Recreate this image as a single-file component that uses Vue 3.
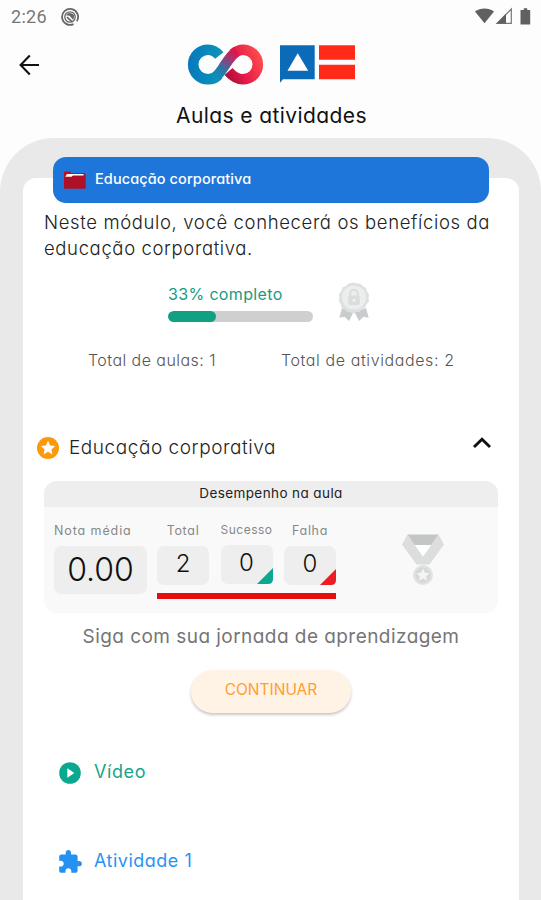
<script setup>
const stats = [
  { key: 'total', label: 'Total', value: 2, corner: '' },
  { key: 'success', label: 'Sucesso', value: 0, corner: '#0aa88f' },
  { key: 'fail', label: 'Falha', value: 0, corner: '#ee1c23' },
]
const progress = 33
</script>

<template>
  <div class="screen">
    <header class="status">
      <span class="time">2:26</span>
      <svg class="status-app" width="20" height="20" viewBox="0 0 20 20" fill="none" stroke="#666">
        <path d="M13.500 17.100A8 8 0 1 1 16.800 14.200" stroke-width="1.800" />
        <circle cx="10" cy="10" r="5.200" stroke-width="1.300" />
        <path d="M6 8.200C8 5 12 5.300 14.300 8.500L13.300 13 9.500 8.800Z" fill="#666" stroke="none" />
        <path d="M7 10.200 12 14.600" stroke-width="1.600" />
      </svg>
      <svg class="signals" width="58" height="20" viewBox="0 0 58 20">
        <path d="M0 4.600C5.500.3 13.500.3 19 4.600L9.500 16.200Z" fill="#606060" />
        <path d="M36.300 2V16.300H22Z" fill="none" stroke="#777" stroke-width="1.200" />
        <path d="M31 6.800V16.500H21.500Z" fill="#606060" />
        <path d="M48.800 1.200H52.200V3H55.200V17.500H45.500V3H48.800Z" fill="#606060" />
      </svg>
    </header>

    <div class="topbar">
      <svg class="back" width="22" height="22" viewBox="0 0 22 22" fill="none" stroke="#111" stroke-width="2.100">
        <path d="M20 11H2M10.800 1.500 1.600 11 10.800 20.500" />
      </svg>
      <svg class="logo" width="170" height="44" viewBox="0 0 170 44">
        <defs>
          <linearGradient id="blueLoop" gradientUnits="userSpaceOnUse" x1="1" y1="0" x2="42" y2="0">
            <stop offset="0" stop-color="#0878bd" />
            <stop offset="1" stop-color="#0b9bb8" />
          </linearGradient>
          <linearGradient id="redLoop" gradientUnits="userSpaceOnUse" x1="38" y1="34" x2="76" y2="16">
            <stop offset="0" stop-color="#a50d36" />
            <stop offset=".4" stop-color="#e31848" />
            <stop offset="1" stop-color="#ff4d4d" />
          </linearGradient>
          <linearGradient id="bridge" gradientUnits="userSpaceOnUse" x1="28" y1="34" x2="47" y2="9">
            <stop offset="0" stop-color="#0a90ba" />
            <stop offset=".35" stop-color="#2c75a8" />
            <stop offset=".6" stop-color="#7d4a84" />
            <stop offset="1" stop-color="#dc174d" />
          </linearGradient>
        </defs>
        <g fill="none" stroke-width="10.600">
          <path d="M46 10.900C49 8.200 52 6.700 56 6.700A14.800 14.800 0 1 1 56 36.300C50 36.300 45.500 33 41.500 28.500" stroke="url(#redLoop)" />
          <path d="M32.300 12.500C29 8.500 25 6.700 21 6.700A14.800 14.800 0 1 0 21 36.300C25 36.300 28.500 35 31.500 31.800" stroke="url(#blueLoop)" />
          <path d="M30.200 19.500 40.300 7.500" stroke="#fdfdfd" stroke-width="2" />
          <path d="M27 35.200C31 32.500 33.500 29 37 23.500S44.500 11.500 50 8.200" stroke="url(#bridge)" />
        </g>
        <path d="M93 2.200H127.700V36.300H96L93 39.800Z" fill="#0c6bb8" />
        <path d="M110.700 10.200 121.200 27.800H100.500Z" fill="#fff" />
        <path d="M132 2.200H168V16.700H132ZM132 21.800H168V36.300H132Z" fill="#ff2a17" />
      </svg>
    </div>
    <h1 class="title"><span>Aulas e atividades</span></h1>

    <main class="shell">
      <div class="sheet">
        <section class="banner">
          <svg width="23" height="19" viewBox="0 0 23 19">
            <path d="M1 1.500Q1 .5 2 .5H7L8.500 2H21.500Q22.500 2 22.500 3V17.500H1Z" fill="#b21325" />
            <path d="M2.500 5.200 4 3H20.500V4.500H10L8.500 5.800H2.500Z" fill="#fff" />
            <path d="M1 6.600H8.500L10 5.300H22.500V17.500H1Z" fill="#ad1027" />
          </svg>
          <span>Educação corporativa</span>
        </section>

        <p class="intro">Neste módulo, você conhecerá os benefícios da<br>educação corporativa.</p>

        <section class="progress-row">
          <div class="progress">
            <div class="progress-label"><span>{{ progress }}% completo</span></div>
            <div class="track"><div class="fill" :style="{ width: progress + '%' }"></div></div>
          </div>
          <svg class="seal" width="32" height="42" viewBox="0 0 32 42">
            <path d="M4 26 1.300 35.800 6.500 34.800 11 39 15.500 30ZM28 26 30.700 35.800 25.500 34.800 21 39 16.500 30Z" fill="#c9cccc" />
            <path d="M16 .5 19 1.500 22.500 1.800 25 4.300 28 6 29 9.500 31 12.500 30.500 16 31 19.500 28.500 22.300 27 25.500 24 27 21.500 30 18 30 16 31.500 12.500 30.500 9 29.500 6.500 27 3.500 25.500 2.500 22 1 19 1.300 15.500 1 12 3.300 9 4.500 5.500 8 4 10.500 1.500Z" fill="#dee1e1" />
            <circle cx="16" cy="15.500" r="12" fill="#eceeee" />
            <path d="M12.200 14.500V11.500A3.800 3.800 0 0 1 19.800 11.500V14.500" fill="none" stroke="#dadddd" stroke-width="2" />
            <rect x="10.300" y="13.500" width="11.400" height="9.500" rx="1.500" fill="#dadddd" />
            <circle cx="16" cy="18.200" r="1.500" fill="#f1f2f2" />
          </svg>
        </section>

        <section class="totals">
          <span class="t1">Total de aulas: 1</span>
          <span class="t2">Total de atividades: 2</span>
        </section>

        <section class="lesson">
          <svg width="24" height="24" viewBox="0 0 24 24">
            <circle cx="12" cy="12" r="11" fill="#fb990b" />
            <path d="M12 4.700 14.100 9.400 19.200 9.900 15.400 13.400 16.500 18.400 12 15.800 7.500 18.400 8.600 13.400 4.800 9.900 9.900 9.400Z" fill="#fff" />
          </svg>
          <span>Educação corporativa</span>
          <svg class="chevron" width="20" height="14" viewBox="0 0 20 14" fill="none" stroke="#111" stroke-width="2.900">
            <path d="M2 11 10 3.200 18 11" />
          </svg>
        </section>

        <section class="card">
          <div class="card-head"><span>Desempenho na aula</span></div>
          <div class="card-body">
            <div class="average">
              <div class="label"><span>Nota média</span></div>
              <div class="score"><span>0.00</span></div>
            </div>
            <div class="stats">
              <div class="stat-row">
                <div v-for="s in stats" :key="s.key" class="stat" :class="s.key">
                  <div class="label"><span>{{ s.label }}</span></div>
                  <div class="box">
                    <span>{{ s.value }}</span>
                    <svg v-if="s.corner" class="corner" width="16" height="16" viewBox="0 0 16 16">
                      <path d="M16 0V11Q16 16 11 16H0Z" :fill="s.corner" />
                    </svg>
                  </div>
                </div>
              </div>
              <div class="redline"></div>
            </div>
            <svg class="medal" width="42" height="52" viewBox="0 0 42 52">
              <path d="M5.500 .5H36.500L30 11H12Z" fill="#c4c6c6" />
              <path d="M5.500 .5 0 10.500 14.500 30.500H27.500L42 10.500 36.500 .5 21 22.500Z" fill="#dcdede" />
              <path d="M13 11H29L21 22.500Z" fill="#fff" />
              <circle cx="21" cy="41" r="10" fill="#e0e2e2" />
              <circle cx="21" cy="41" r="7.600" fill="#d6d8d8" />
              <path d="M21 34.500 23 38.700 27.500 39.200 24.200 42.200 25 46.700 21 44.500 17 46.700 17.800 42.200 14.500 39.200 19 38.700Z" fill="#f3f4f4" />
            </svg>
          </div>
        </section>

        <p class="follow"><span>Siga com sua jornada de aprendizagem</span></p>
        <button class="continue"><span>CONTINUAR</span></button>

        <div class="item video">
          <svg width="24" height="24" viewBox="0 0 24 24">
            <circle cx="12" cy="12" r="10.800" fill="#0ba890" />
            <path d="M9.300 7.300 16.300 12 9.300 16.700Z" fill="#fff" />
          </svg>
          <span>Vídeo</span>
        </div>
        <div class="item activity">
          <svg width="26" height="26" viewBox="0 0 24 24">
            <path fill="#2491f3" d="M20.500 11H19V7c0-1.100-.9-2-2-2h-4V3.500C13 2.120 11.880 1 10.500 1S8 2.120 8 3.500V5H4c-1.100 0-1.990.9-1.990 2v3.800H3.500c1.490 0 2.700 1.210 2.700 2.700s-1.210 2.700-2.700 2.700H2V20c0 1.100.9 2 2 2h3.800v-1.500c0-1.490 1.210-2.700 2.700-2.700 1.490 0 2.700 1.210 2.700 2.700V22H17c1.100 0 2-.9 2-2v-4h1.500c1.380 0 2.500-1.120 2.500-2.500S21.880 11 20.500 11z" />
          </svg>
          <span>Atividade 1</span>
        </div>
      </div>
    </main>
  </div>
</template>

<style>
body { margin: 0; background: #fdfdfd; }
</style>

<style scoped>
* { box-sizing: border-box; }
.screen {
  width: 541px;
  height: 900px;
  overflow: hidden;
  background: #fdfdfd;
  font-family: Inter, "Open Sans", sans-serif;
  font-feature-settings: "cv11";
  display: flex;
  flex-direction: column;
  white-space: nowrap;
}
svg { display: block; flex: none; }
.status { height: 34px; display: flex; align-items: center; padding: 0 8px 0 11px; flex: none; }
.time { font: 400 18px/20px Roboto, sans-serif; color: #777; letter-spacing: .3px; }
.status-app { margin-left: 13px; }
.signals { margin-left: auto; }
.topbar { height: 62px; display: flex; align-items: center; flex: none; padding-left: 19px; }
.back { margin-right: 146px; }
.title { margin: 0; height: 42px; line-height: 39px; text-align: center; font-size: 21px; font-weight: 400; color: #111; flex: none; padding-left: 2px; }
.title span { letter-spacing: .4px; }
.shell { background: #e9e9e9; height: 762px; border-radius: 54px 54px 0 0; padding: 40px 22px 0 23px; flex: none; }
.sheet { background: #fff; height: 722px; border-radius: 13px 13px 0 0; padding: 0 21px; display: flex; flex-direction: column; }
.banner {
  flex: none;
  margin: -21px 9px 0;
  height: 46px;
  border-radius: 13px;
  background: #1e76da;
  display: flex;
  align-items: center;
  padding: 0 10px;
  gap: 9px;
  color: #fff;
  font-size: 14.500px;
  font-weight: 500;
}
.banner span { padding-bottom: 4px; letter-spacing: .1px; }
.intro { margin: 6px 0 0; font-size: 18.500px; font-weight: 300; line-height: 26px; color: #222; letter-spacing: .63px; }
.progress-row { display: flex; margin-top: 21px; padding-left: 124px; height: 42px; }
.progress { width: 145px; margin-right: 25px; }
.progress-label { height: 29px; line-height: 25px; font-size: 16px; color: #159c80; }
.progress-label span { letter-spacing: .35px; }
.track { height: 11px; border-radius: 6px; background: #cecfcf; overflow: hidden; }
.fill { height: 100%; border-radius: 6px; background: #12a083; }
.totals { display: flex; margin-top: 24px; padding-left: 44px; height: 24px; line-height: 24px; font-size: 16px; font-weight: 300; color: #555; }
.t1 { width: 193px; letter-spacing: .45px; }
.t2 { letter-spacing: .6px; }
.lesson { display: flex; align-items: center; height: 32px; margin: 60px 0 0 -8px; font-size: 19px; font-weight: 300; color: #222; gap: 9px; }
.lesson span { letter-spacing: .55px; padding-bottom: 2px; }
.chevron { margin-left: auto; margin-right: 6px; margin-bottom: 10px; }
.card { flex: none; margin-top: 17px; width: 454px; height: 132px; border-radius: 13px; background: #f9f9f9; overflow: hidden; }
.card-head { height: 26px; line-height: 24px; background: #eee; text-align: center; font-size: 13.500px; color: #222; }
.card-head span { letter-spacing: .4px; }
.card-body { display: flex; padding: 13px 11px 0 10px; }
.label { height: 20px; line-height: 21px; font-size: 12.500px; color: #888; text-align: center; }
.label span { letter-spacing: .7px; }
.average { width: 93px; margin-right: 10px; }
.average .label { text-align: left; margin-bottom: 6px; }
.average .label span { letter-spacing: .9px; }
.score { height: 48px; border-radius: 7px; background: #eee; line-height: 48px; font-size: 32px; font-weight: 300; text-align: center; color: #111; }
.stats { width: 179px; }
.stat-row { display: flex; justify-content: space-between; height: 67px; }
.stat { width: 52px; }
.stat .box { position: relative; height: 39px; margin-top: 6px; border-radius: 7px; background: #eee; line-height: 36px; font-size: 24px; font-weight: 300; color: #111; text-align: center; }
.success .label { line-height: 19px; font-size: 12px; }
.success .label span { letter-spacing: .5px; }
.success .box { margin-top: 5px; }
.corner { position: absolute; right: 0; bottom: 0; }
.redline { height: 6px; margin-top: 6px; background: #e60c0f; }
.medal { margin: 14px 0 0 66px; }
.follow { margin: 10px 0 0; height: 28px; line-height: 28px; text-align: center; font-size: 19px; color: #757575; }
.follow span { letter-spacing: .45px; }
.continue { align-self: center; width: 160px; height: 43px; margin-top: 19px; flex: none; border: 0; border-radius: 22px; background: #fff3e5; box-shadow: 0 2px 3px rgba(0, 0, 0, .22); font: 400 15.500px/20px Inter, sans-serif; color: #ff9f2e; padding: 0 0 3px; }
.item { display: flex; align-items: center; flex: none; height: 30px; font-size: 18px; }
.item span { letter-spacing: .6px; padding-bottom: 3px; }
.video { margin: 45px 0 0 14px; gap: 12px; color: #17a58c; }
.activity { margin: 59px 0 0 13px; gap: 11px; color: #2b92f0; }
.activity span { letter-spacing: .5px; }
</style>
